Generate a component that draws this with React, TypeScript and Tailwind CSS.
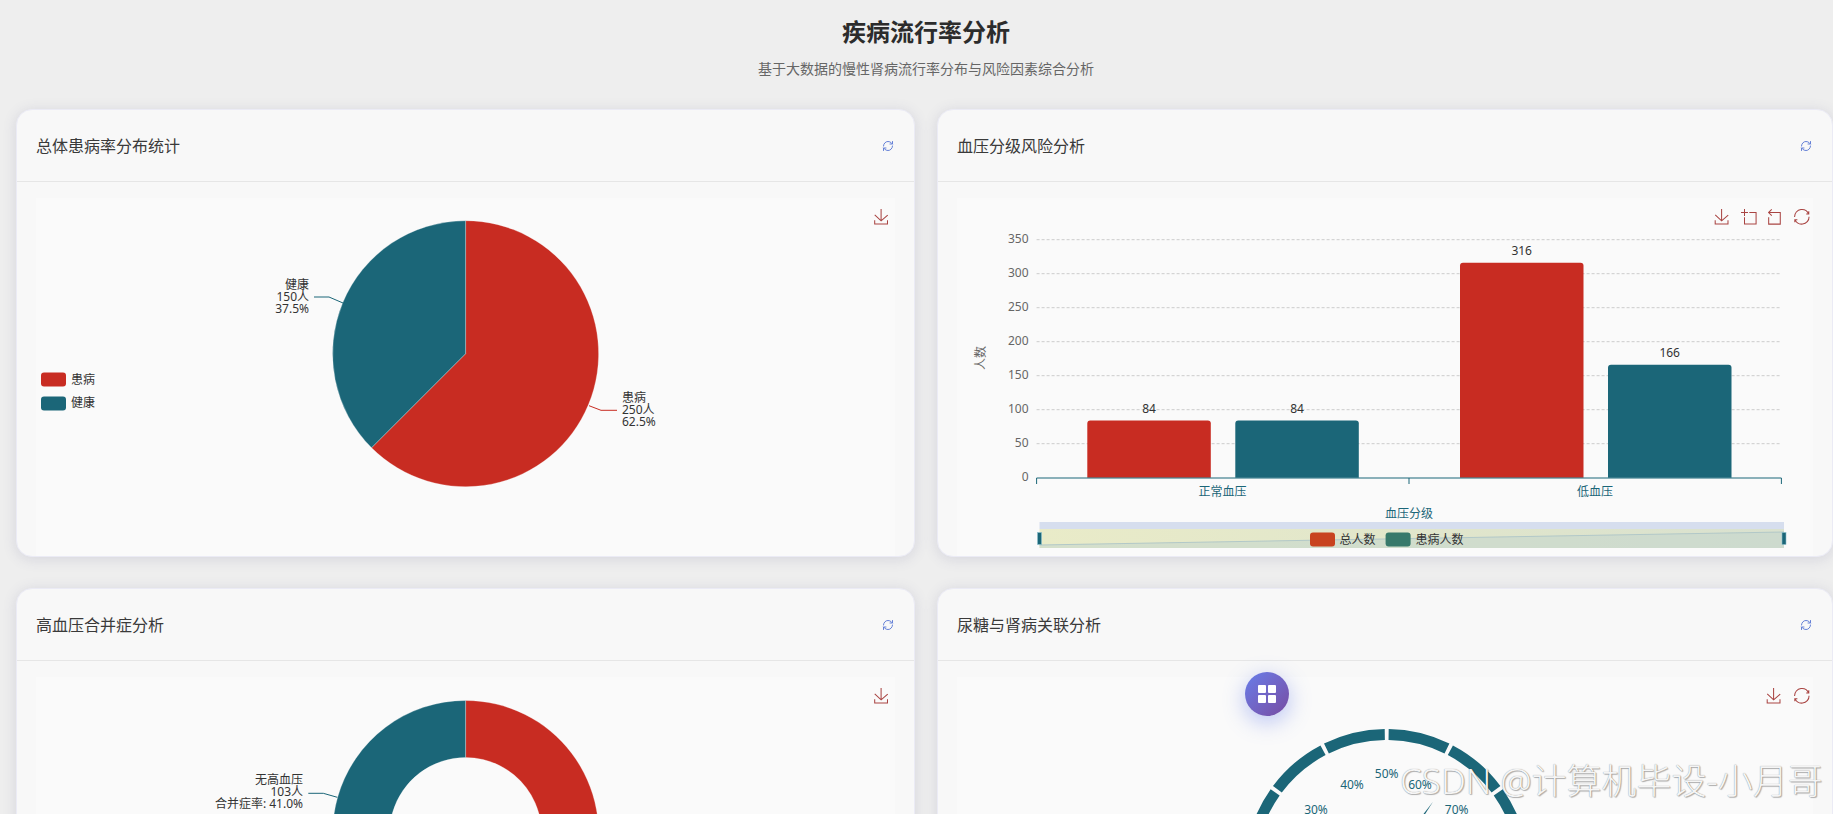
import { RefreshCw } from "lucide-react";
import type { ReactNode } from "react";

const RED = "#c82c22";
const TEAL = "#1b6678";
const TEXT = "#333333";

const ICONS = {
  save: "M4.7,22.9L29.3,45.5L54.7,23.4M4.6,43.6L4.6,58L53.8,58L53.8,43.6M29.2,45.1L29.2,0",
  zoom: "M0,13.5h26.9 M13.5,26.9V0 M32.1,13.5H58V58H13.5 V32.1",
  back: "M22,1.4L9.9,13.5l12.3,12.3 M10.3,13.5H54.9v44.6 H10.3v-26",
  restore:
    "M47,18.9h9.8V8.7 M56.3,20.1 C52.1,9,40.5,0.6,26.8,2.1C12.6,3.7,1.6,16.2,2.1,30.6 M13,41.1H3.1v10.2 M3.7,39.9c4.2,11.1,15.8,19.5,29.5,18 c14.2-1.6,25.2-14.1,24.7-28.5",
};

const polar = (cx: number, cy: number, r: number, deg: number) => {
  const a = (deg * Math.PI) / 180;
  return [cx + r * Math.sin(a), cy - r * Math.cos(a)];
};

const ring = (cx: number, cy: number, r0: number, r1: number, from: number, to: number) => {
  const large = to - from > 180 ? 1 : 0;
  const [ax, ay] = polar(cx, cy, r1, from);
  const [bx, by] = polar(cx, cy, r1, to);
  if (r0 === 0) return `M${cx},${cy}L${ax},${ay}A${r1},${r1} 0 ${large} 1 ${bx},${by}Z`;
  const [dx, dy] = polar(cx, cy, r0, from);
  const [ex, ey] = polar(cx, cy, r0, to);
  return `M${ax},${ay}A${r1},${r1} 0 ${large} 1 ${bx},${by}L${ex},${ey}A${r0},${r0} 0 ${large} 0 ${dx},${dy}Z`;
};

const arc = (cx: number, cy: number, r: number, from: number, to: number) => {
  const [ax, ay] = polar(cx, cy, r, from);
  const [bx, by] = polar(cx, cy, r, to);
  return `M${ax},${ay}A${r},${r} 0 0 1 ${bx},${by}`;
};

const ToolIcon = ({ d, x, y }: { d: string; x: number; y: number }) => (
  <path
    d={d}
    transform={`translate(${x},${y}) scale(0.26)`}
    fill="none"
    stroke="#a94442"
    strokeWidth={4}
  />
);

const Label = ({
  x,
  y,
  lines,
  anchor = "start",
}: {
  x: number;
  y: number;
  lines: string[];
  anchor?: "start" | "end";
}) => (
  <text x={x} fontSize={12} fill={TEXT} textAnchor={anchor} dominantBaseline="central">
    {lines.map((line, i) => (
      <tspan key={line} x={x} y={y + i * 12}>
        {line}
      </tspan>
    ))}
  </text>
);

const Swatch = ({ x, y, color }: { x: number; y: number; color: string }) => (
  <rect x={x} y={y} width={25} height={14} rx={3} fill={color} />
);

const Card = ({ title, children }: { title: string; children: ReactNode }) => (
  <div className="h-[448px] rounded-2xl bg-[#f8f8f8] border border-[#ebebf5] shadow-[0_2px_14px_rgba(80,80,130,0.16)] overflow-hidden">
    <div className="h-[72px] flex items-center justify-between pl-[19px] pr-[20px] border-b border-[#e6e6e6]">
      <span className="text-base text-[#3a3a3a]">{title}</span>
      <RefreshCw size={12} strokeWidth={2} className="text-[#6580d6]" />
    </div>
    <div className="mx-[19px] mt-4 h-[360px] bg-[#fafafa]">{children}</div>
  </div>
);

const OverallPie = () => (
  <svg viewBox="36 198 859 360" className="w-full h-full">
    <path d={ring(465.6, 353.7, 0, 133, 0, 225)} fill={RED} stroke="#ffffff" strokeOpacity={0.35} strokeWidth={0.8} />
    <path d={ring(465.6, 353.7, 0, 133, 225, 360)} fill={TEAL} stroke="#ffffff" strokeOpacity={0.35} strokeWidth={0.8} />
    <path d="M314,297H329L343,303" fill="none" stroke={TEAL} />
    <path d="M617,410.3H601L589,405.7" fill="none" stroke={RED} />
    <Label x={309} y={284} lines={["健康", "150人", "37.5%"]} anchor="end" />
    <Label x={622} y={397} lines={["患病", "250人", "62.5%"]} />
    <Swatch x={41} y={372.5} color={RED} />
    <Label x={71} y={378.5} lines={["患病"]} />
    <Swatch x={41} y={396.5} color={TEAL} />
    <Label x={71} y={402} lines={["健康"]} />
    <ToolIcon d={ICONS.save} x={873.5} y={209} />
  </svg>
);

const BP_ZERO = 477.7;
const BP_TICKS = [0, 50, 100, 150, 200, 250, 300, 350];
const BP_BARS = [
  { x: 1087.3, value: 84, color: RED },
  { x: 1235.3, value: 84, color: TEAL },
  { x: 1460, value: 316, color: RED },
  { x: 1608, value: 166, color: TEAL },
];

const BloodPressureBars = () => (
  <svg viewBox="957 198 856 360" className="w-full h-full">
    <defs>
      <linearGradient id="sliderBg" x1="0" y1="0" x2="1" y2="0">
        <stop offset="0" stopColor="#e9ebc8" />
        <stop offset="1" stopColor="#d9e1cf" />
      </linearGradient>
    </defs>
    {BP_TICKS.map((t) => {
      const y = BP_ZERO - t * 0.68;
      return (
        <g key={t}>
          {t > 0 && <line x1={1036.6} x2={1781.4} y1={y} y2={y} stroke="#cccccc" strokeDasharray="3 2" />}
          <text x={1028.5} y={y - 1} fontSize={12} fill="#666666" textAnchor="end" dominantBaseline="central">
            {t}
          </text>
        </g>
      );
    })}
    {BP_BARS.map((b) => {
      const h = b.value * 0.68;
      return (
        <g key={b.x}>
          <path
            d={`M${b.x},${BP_ZERO}V${BP_ZERO - h + 3}q0,-3 3,-3H${b.x + 120.5}q3,0 3,3V${BP_ZERO}Z`}
            fill={b.color}
          />
          <text
            x={b.x + 61.7}
            y={BP_ZERO - h - 12.5}
            fontSize={12}
            fill={TEXT}
            textAnchor="middle"
            dominantBaseline="central"
          >
            {b.value}
          </text>
        </g>
      );
    })}
    <path d="M1036.6,484V478H1781.4V484M1409,478V484" fill="none" stroke={TEAL} />
    <text x={1222.6} y={491} fontSize={12} fill={TEAL} textAnchor="middle" dominantBaseline="central">
      正常血压
    </text>
    <text x={1595} y={491} fontSize={12} fill={TEAL} textAnchor="middle" dominantBaseline="central">
      低血压
    </text>
    <text x={1409} y={513.5} fontSize={12} fill={TEAL} textAnchor="middle" dominantBaseline="central">
      血压分级
    </text>
    <text
      transform="translate(980.7,358) rotate(-90)"
      fontSize={12}
      fill="#666666"
      textAnchor="middle"
      dominantBaseline="central"
    >
      人数
    </text>

    <rect x={1039.5} y={522} width={744.5} height={7} fill="#d6deee" />
    <rect x={1039.5} y={529} width={744.5} height={19} fill="url(#sliderBg)" />
    <path d="M1039.5,545L1784,532V548H1039.5Z" fill="#c2d5cd" fillOpacity={0.55} />
    <path d="M1039.5,545L1784,532" stroke="#b2c8c8" fill="none" />
    <rect x={1037.5} y={532.5} width={4} height={12} fill={TEAL} stroke="#8cc0cc" strokeWidth={0.6} />
    <rect x={1782} y={532.5} width={4} height={12} fill={TEAL} stroke="#8cc0cc" strokeWidth={0.6} />
    <Swatch x={1310} y={532.5} color="#c8431f" />
    <Label x={1339.6} y={539} lines={["总人数"]} />
    <Swatch x={1385.6} y={532.5} color="#37796b" />
    <Label x={1415.6} y={539} lines={["患病人数"]} />

    <ToolIcon d={ICONS.save} x={1714} y={209} />
    <ToolIcon d={ICONS.zoom} x={1741} y={209} />
    <ToolIcon d={ICONS.back} x={1766} y={209} />
    <ToolIcon d={ICONS.restore} x={1794} y={209} />
  </svg>
);

const HypertensionDonut = () => (
  <svg viewBox="36 677 859 360" className="w-full h-full">
    <path d={ring(465.6, 833.5, 76, 133, 0, 212)} fill={RED} stroke="#ffffff" strokeOpacity={0.35} strokeWidth={0.8} />
    <path d={ring(465.6, 833.5, 76, 133, 212, 360)} fill={TEAL} stroke="#ffffff" strokeOpacity={0.35} strokeWidth={0.8} />
    <path d="M308.3,793.3H323.3L337.3,797.3" fill="none" stroke={TEAL} />
    <Label x={303} y={779} lines={["无高血压", "103人", "合并症率: 41.0%"]} anchor="end" />
    <ToolIcon d={ICONS.save} x={873.5} y={688} />
  </svg>
);

const GAUGE_LABELS = [
  { text: "30%", x: 1316, y: 809 },
  { text: "40%", x: 1352, y: 784.7 },
  { text: "50%", x: 1386.7, y: 773.7 },
  { text: "60%", x: 1420, y: 784.7 },
  { text: "70%", x: 1456.7, y: 809 },
];

const UrineGauge = () => (
  <svg viewBox="957 677 856 360" className="w-full h-full">
    {Array.from({ length: 10 }, (_, i) => -135 + i * 27).map((from) => (
      <path
        key={from}
        d={arc(1386.7, 871, 136.5, from + 0.8, from + 26.2)}
        fill="none"
        stroke={TEAL}
        strokeWidth={11}
      />
    ))}
    {GAUGE_LABELS.map((l) => (
      <text key={l.text} x={l.x} y={l.y} fontSize={12} fill={TEAL} textAnchor="middle" dominantBaseline="central">
        {l.text}
      </text>
    ))}
    <polygon points="1433,801.7 1390,869 1384,865" fill={TEAL} />
    <ToolIcon d={ICONS.save} x={1766} y={688} />
    <ToolIcon d={ICONS.restore} x={1794} y={688} />
  </svg>
);

export default function App() {
  return (
    <div className="relative h-screen overflow-hidden bg-[#eeeeee] font-['Noto_Sans','Noto_Sans_CJK_SC',sans-serif]">
      <div className="h-[109px] flex flex-col items-center pt-[14px] pl-[19px]">
        <h1 className="text-2xl leading-9 font-bold text-[#2c2c2c]">疾病流行率分析</h1>
        <p className="mt-[9px] text-sm text-[#666666]">基于大数据的慢性肾病流行率分布与风险因素综合分析</p>
      </div>

      <div className="grid grid-cols-[899px_896px] gap-x-[22px] gap-y-[31px] pl-4">
        <Card title="总体患病率分布统计">
          <OverallPie />
        </Card>
        <Card title="血压分级风险分析">
          <BloodPressureBars />
        </Card>
        <Card title="高血压合并症分析">
          <HypertensionDonut />
        </Card>
        <Card title="尿糖与肾病关联分析">
          <UrineGauge />
        </Card>
      </div>

      {/* floating menu button */}
      <div className="absolute left-[1245px] top-[672px] size-11 rounded-full flex items-center justify-center bg-linear-to-br from-[#667eea] to-[#764ba2] shadow-[0_6px_22px_rgba(102,126,234,0.45)]">
        <svg width="18" height="18" viewBox="0 0 18 18" fill="#ffffff">
          <rect x="0" y="0" width="8" height="8" rx="1" />
          <rect x="10" y="0" width="8" height="8" rx="1" />
          <rect x="0" y="10" width="8" height="8" rx="1" />
          <rect x="10" y="10" width="8" height="8" rx="1" />
        </svg>
      </div>

      {/* screenshot watermark */}
      <div className="absolute left-[1400px] top-[759px] text-[35px] leading-[44px] font-light whitespace-nowrap text-[#f5f5f5] [text-shadow:0_0_1px_rgba(0,0,0,0.45),1px_1px_1px_rgba(0,0,0,0.28)]">
        CSDN @计算机毕设-小月哥
      </div>
    </div>
  );
}
